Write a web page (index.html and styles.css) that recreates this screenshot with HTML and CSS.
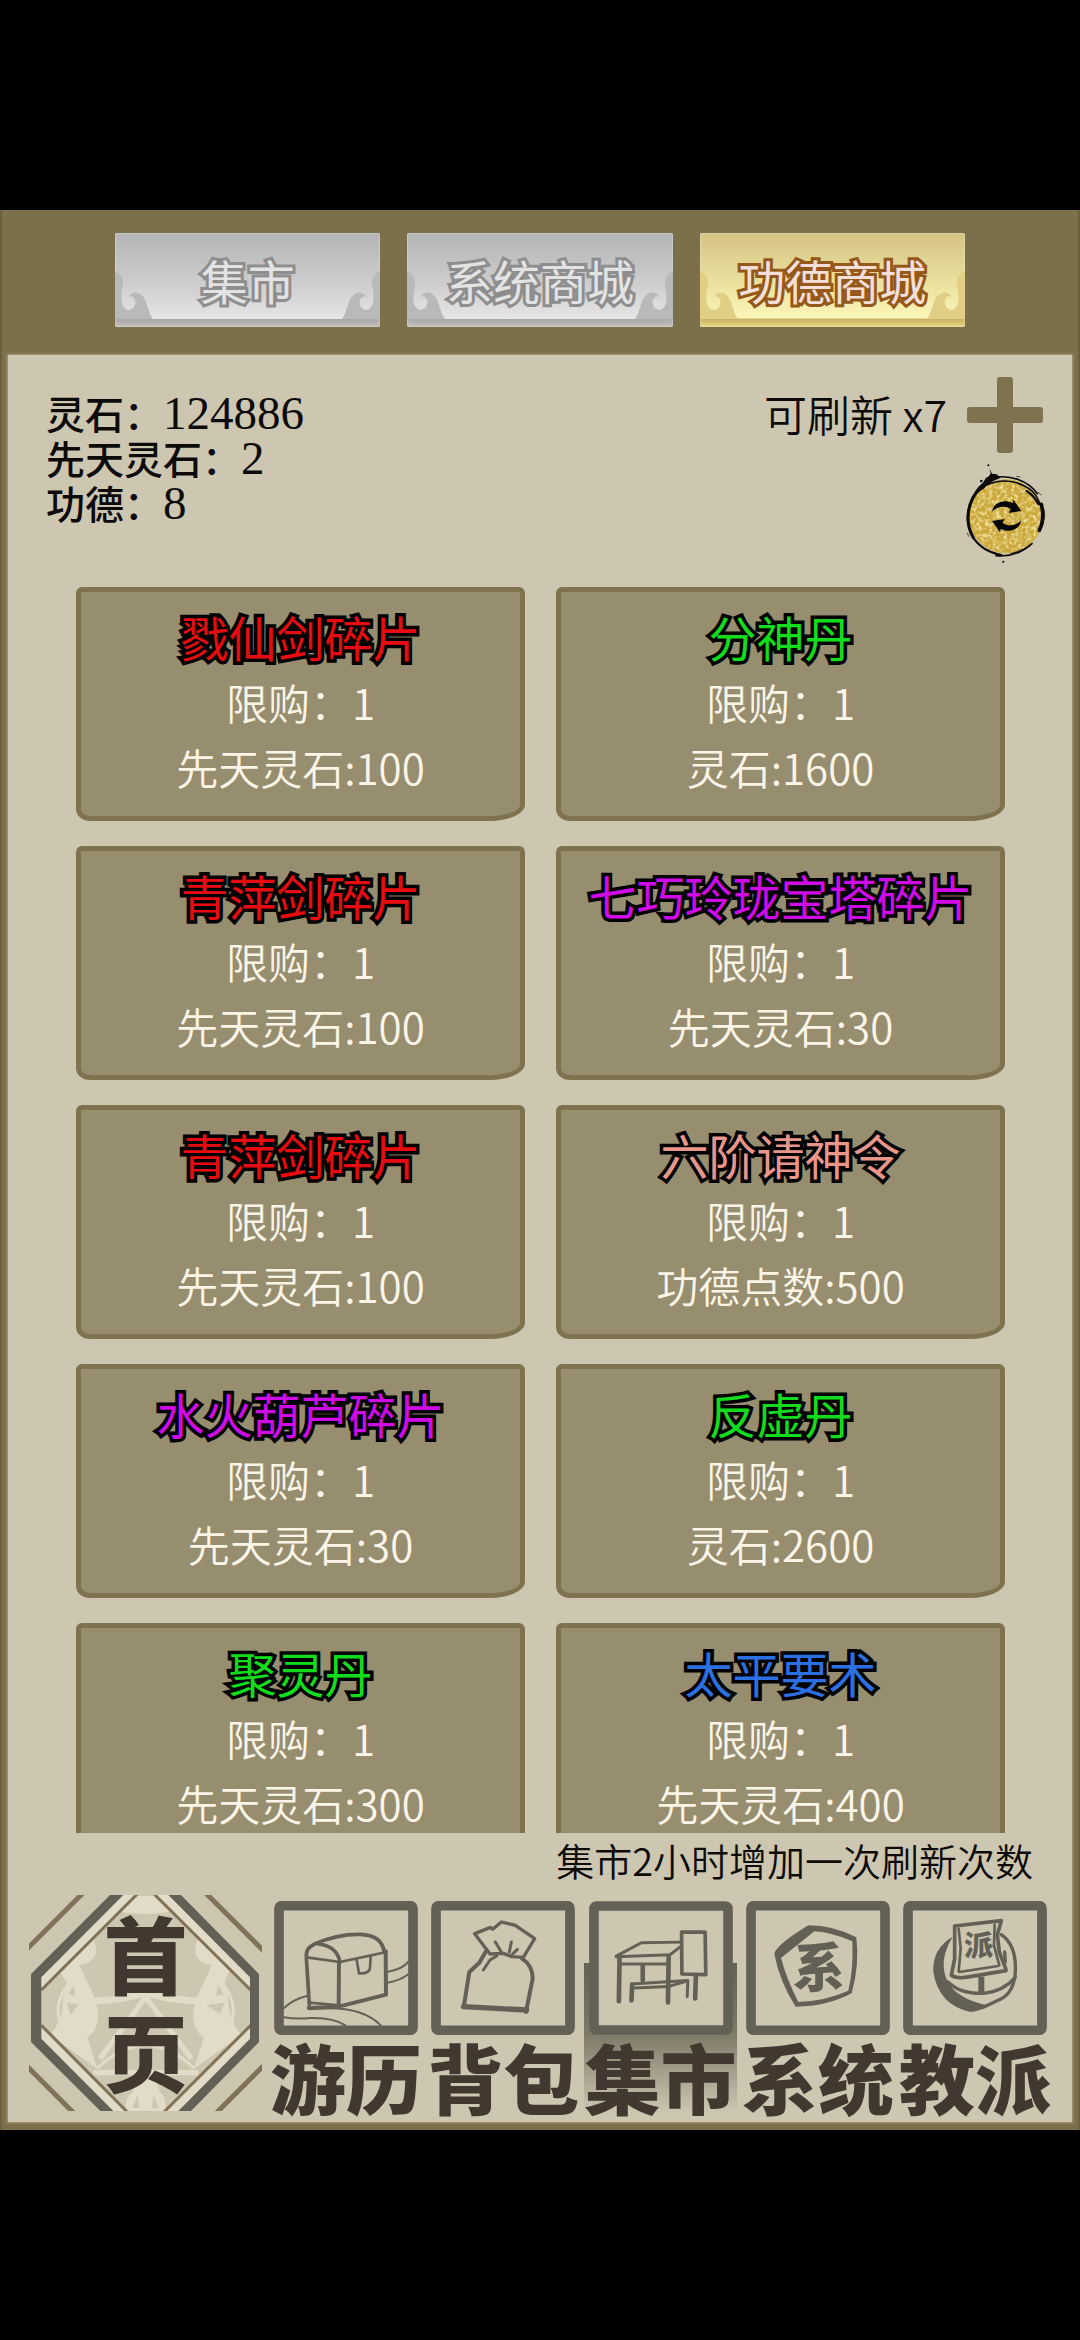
FILE: index.html
```html
<!DOCTYPE html>
<html lang="zh-CN">
<head>
  <meta charset="UTF-8">
  <title>功德商城</title>
  <meta name="viewport" content="width=device-width, initial-scale=1.0">
  <link rel="stylesheet" href="styles.css">
</head>
<body>
  <svg class="defs" aria-hidden="true">
    <defs>
      <path id="curl" d="M0 38 Q9 42 8 52 C6 60 4 74 13 77 C20 77 23 68 18 64 Q15 62 13 65 Q17 58 23 60 C33 64 31 76 38 86 H0 Z"/>
    </defs>
  </svg>

  <div class="game">
    <header class="tabs">
      <button class="tab">
        <svg class="curl" viewBox="0 0 38 94"><use href="#curl"/></svg>
        <span>集市</span>
        <svg class="curl flip" viewBox="0 0 38 94"><use href="#curl"/></svg>
      </button>
      <button class="tab">
        <svg class="curl" viewBox="0 0 38 94"><use href="#curl"/></svg>
        <span>系统商城</span>
        <svg class="curl flip" viewBox="0 0 38 94"><use href="#curl"/></svg>
      </button>
      <button class="tab active">
        <svg class="curl" viewBox="0 0 38 94"><use href="#curl"/></svg>
        <span>功德商城</span>
        <svg class="curl flip" viewBox="0 0 38 94"><use href="#curl"/></svg>
      </button>
    </header>

    <main class="panel">
      <section class="top">
        <div class="stats">
          <p>灵石：<span>124886</span></p>
          <p>先天灵石：<span>2</span></p>
          <p>功德：<span>8</span></p>
        </div>
        <div class="refresh">
          <div class="refresh-row">
            <span>可刷新 x7</span>
            <button class="icon-btn" aria-label="增加次数">
              <svg class="plus" viewBox="0 0 84 76">
                <rect x="34" y="0" width="16" height="76" rx="3"/>
                <rect x="4" y="30" width="76" height="16" rx="3"/>
              </svg>
            </button>
          </div>
          <button class="icon-btn" aria-label="刷新">
            <svg class="coin" viewBox="790 310 250 300">
              <defs>
                <filter id="grain" x="0" y="0" width="1" height="1">
                  <feTurbulence type="fractalNoise" baseFrequency="0.09" numOctaves="3" seed="4"/>
                  <feColorMatrix values="0 0 0 0 0.93  0 0 0 0 0.83  0 0 0 0 0.42  2.4 0 0 0 -1"/>
                  <feComposite in2="SourceGraphic" operator="in"/>
                </filter>
              </defs>
              <circle cx="918" cy="470" r="111" fill="#cba83c"/>
              <circle cx="918" cy="470" r="109" fill="#fff" filter="url(#grain)"/>
              <g fill="none" stroke="#0b0a08" stroke-linecap="round">
                <path d="M840 386 C800 426 794 490 820 534" stroke-width="9"/>
                <path d="M818 532 C840 566 870 580 904 586" stroke-width="6"/>
                <path d="M832 548 Q852 572 886 580" stroke-width="4"/>
                <path d="M888 588 Q950 594 996 552" stroke-width="5"/>
                <path d="M932 582 Q972 572 990 556" stroke-width="3"/>
                <path d="M880 354 C930 344 984 362 1012 402" stroke-width="5"/>
                <path d="M860 376 C910 354 960 364 996 394 Q1014 412 1020 436" stroke-width="5"/>
                <path d="M980 394 Q1004 410 1014 432" stroke-width="7"/>
                <path d="M1024 434 C1032 466 1028 492 1018 512" stroke-width="11"/>
                <path d="M1031 450 Q1035 476 1026 500" stroke-width="4"/>
                <path d="M810 430 Q796 470 806 506" stroke-width="4"/>
                <path d="M950 350 L960 352 M1014 398 L1024 406 M802 520 L806 530" stroke-width="2"/>
              </g>
              <path fill="#0b0a08" d="M812 428 Q820 392 850 368 L858 354 Q868 352 872 340 L868 326 L876 342 L890 344 L902 354 L880 364 L862 376 Q850 392 832 398 Q820 410 812 428 Z"/>
              <circle cx="865" cy="317" r="3"/><circle cx="844" cy="364" r="4"/><circle cx="910" cy="606" r="3"/>
              <path id="arrow" fill="#050505" d="M876 456 C880 430 908 416 938 430 L940 420 L964 454 L926 460 L932 448 C914 436 892 440 876 456 Z"/>
              <use href="#arrow" transform="rotate(180 920 469)"/>
            </svg>
          </button>
        </div>
      </section>

      <section class="goods" aria-label="商品">
        <button class="card"><b class="red">戮仙剑碎片</b><span>限购：1</span><span>先天灵石:100</span></button>
        <button class="card"><b class="green">分神丹</b><span>限购：1</span><span>灵石:1600</span></button>
        <button class="card"><b class="red">青萍剑碎片</b><span>限购：1</span><span>先天灵石:100</span></button>
        <button class="card"><b class="purple">七巧玲珑宝塔碎片</b><span>限购：1</span><span>先天灵石:30</span></button>
        <button class="card"><b class="red">青萍剑碎片</b><span>限购：1</span><span>先天灵石:100</span></button>
        <button class="card"><b class="salmon">六阶请神令</b><span>限购：1</span><span>功德点数:500</span></button>
        <button class="card"><b class="purple">水火葫芦碎片</b><span>限购：1</span><span>先天灵石:30</span></button>
        <button class="card"><b class="green">反虚丹</b><span>限购：1</span><span>灵石:2600</span></button>
        <button class="card"><b class="green">聚灵丹</b><span>限购：1</span><span>先天灵石:300</span></button>
        <button class="card"><b class="blue">太平要术</b><span>限购：1</span><span>先天灵石:400</span></button>
      </section>

      <p class="note">集市2小时增加一次刷新次数</p>

      <nav class="menu">
        <a class="home" href="#home">
          <svg viewBox="87 69 699 648" aria-hidden="true">
            <path fill="#e1dbc7" d="M350 69 H525 L765 305 V510 L555 717 H320 L110 510 V305 Z"/>
            <path fill="#cdc6b1" d="M410 69 H466 L750 355 V460 L495 717 H380 L124 460 V355 Z"/>
            <g fill="#e1dbc7">
              <path d="M262 162 Q292 210 288 246 Q270 280 238 278 L262 330 Q300 400 294 440 Q290 480 262 496 L292 590 L150 490 Q190 440 190 380 L200 330 L180 300 Z"/>
              <path d="M612 162 Q582 210 586 246 Q604 280 636 278 L612 330 Q574 400 580 440 Q584 480 612 496 L582 590 L724 490 Q684 440 684 380 L674 330 L690 290 Z"/>
              <path d="M330 112 Q437 140 545 112 L466 72 H410 Z"/>
              <path d="M414 600 H460 L480 660 Q502 680 496 717 H378 Q372 680 398 660 Z"/>
              <path d="M190 370 Q310 390 437 350 Q560 390 684 370 V388 Q560 412 437 372 Q310 412 190 388 Z"/>
            </g>
            <g fill="none" stroke="#e1dbc7" stroke-width="9">
              <path d="M210 330 Q150 400 190 480 M664 330 Q724 400 684 480"/>
              <path d="M437 375 L300 560 M437 375 L574 560 M280 602 H594" stroke-width="16"/>
              <path d="M290 590 Q437 450 584 590"/>
            </g>
            <g fill="#cdc6b1">
              <path d="M200 392 L236 396 L212 430 Z M674 392 L620 400 L660 426 Z M220 340 L226 372 L204 366 Z M654 340 L648 372 L670 366 Z"/>
              <path d="M412 670 L418 708 H398 Z M460 670 L478 708 H456 Z"/>
            </g>
            <g fill="none" stroke="#7f7258">
              <path stroke-width="9" d="M412 66 L124 354 M462 66 L752 354 M124 460 L382 720 M752 460 L492 720"/>
              <path stroke-width="15" d="M250 62 L80 232 M616 62 L792 238 M80 582 L222 724 M648 724 L792 580"/>
            </g>
            <path fill="#636155" d="M330 69 H370 L124 316 V500 L340 717 H301 L93 510 V306 Z M505 69 H543 L777 306 V510 L573 717 H535 L750 500 V316 Z"/>
          </svg>
          <span>首</span>
          <span>页</span>
        </a>

        <a class="item" href="#travel">
          <svg viewBox="42 61 432 402" aria-hidden="true">
            <rect class="frame" x="57" y="75" width="402" height="374" rx="8"/>
            <g stroke-width="6">
              <path d="M72 382 Q100 356 140 346 M72 410 Q110 416 150 412 Q220 410 256 434 M150 386 Q300 370 362 434 M382 274 Q430 264 446 242 M382 306 Q420 300 446 280"/>
            </g>
            <path stroke-width="11" d="M140 232 Q134 204 164 190 Q230 160 300 161 Q366 164 372 212 M176 190 Q230 196 240 244 M139 232 L148 372"/>
            <path stroke-width="8" d="M140 230 L240 244 L380 214 M290 238 L297 278 Q328 280 330 262 L332 226 M148 366 L236 374"/>
            <path stroke-width="12" d="M237 244 L236 372 M377 212 L378 342 L236 378 L146 382"/>
          </svg>
          <span>游历</span>
        </a>
        <a class="item" href="#bag">
          <svg viewBox="507 57 432 402" aria-hidden="true">
            <rect class="frame" x="522" y="71" width="402" height="374" rx="8"/>
            <path stroke-width="10" d="M638 155 L686 136 L692 142 L718 120 L760 130 L818 170 L784 226 L750 224 L724 214 L684 216 Z"/>
            <path stroke-width="12" d="M672 208 L652 242 L622 270 L605 376 M780 230 Q812 250 812 290 L792 390"/>
            <path stroke-width="16" d="M604 374 L794 384"/>
            <path stroke-width="9" d="M700 180 L718 210 M748 180 L742 210 M766 202 L752 216 M704 222 L684 234 L664 264"/>
          </svg>
          <span>背包</span>
        </a>
        <a class="item active" href="#market">
          <svg viewBox="52 57 434 402" aria-hidden="true">
            <rect class="frame" x="67" y="71" width="404" height="374" rx="8"/>
            <path stroke-width="9" d="M134 222 L210 182 L330 180 M134 224 L296 218 L330 192 M148 246 H288 M180 306 L350 296 M190 318 L290 314 L340 300 M350 296 L348 344"/>
            <path stroke-width="14" d="M144 228 L142 358 M292 222 L290 362 M182 308 L180 356 M374 284 L372 350 M214 250 V296"/>
            <path stroke-width="11" d="M331 150 H402 L404 278 L332 276 Z"/>
          </svg>
          <span>集市</span>
        </a>
        <a class="item" href="#system">
          <svg viewBox="519 57 432 402" aria-hidden="true">
            <rect class="frame" x="534" y="71" width="402" height="374" rx="8"/>
            <path fill="#636155" stroke="none" fill-rule="evenodd" d="M706 130 Q780 130 850 166 Q860 250 836 334 Q760 374 668 374 Q620 300 604 216 Q608 190 706 130 Z M724 148 L624 228 Q640 290 676 360 Q760 356 826 326 Q842 260 838 178 Q780 152 724 148 Z"/>
            <text x="738" y="316" font-size="156">系</text>
          </svg>
          <span>系统</span>
        </a>
        <a class="item" href="#sect">
          <svg viewBox="129 57 432 402" aria-hidden="true">
            <rect class="frame" x="144" y="71" width="402" height="374" rx="8"/>
            <path fill="#636155" stroke="none" d="M278 164 Q216 200 220 270 Q236 370 332 390 Q370 386 382 370 Q290 350 264 300 Q232 240 278 164 Z"/>
            <path stroke-width="10" d="M424 158 Q470 190 466 270 Q462 330 424 350 L370 376 M264 300 Q300 336 370 334 Q430 328 466 286 M434 210 L436 240"/>
            <path stroke-width="11" d="M284 132 L424 116 L412 158 L418 210 L438 262 M284 132 L284 230 L274 280 Q290 292 330 284 L438 266"/>
            <path stroke-width="8" d="M296 140 L302 200 L296 268 M404 128 L402 190 L418 250 M298 270 L414 252"/>
            <path stroke-width="18" stroke-linecap="butt" d="M364 284 V332"/>
            <text x="356" y="222" font-size="88">派</text>
          </svg>
          <span>教派</span>
        </a>
      </nav>
    </main>
  </div>
</body>
</html>
```

FILE: styles.css
```css
* { box-sizing: border-box; }
body {
  margin: 0;
  height: 100vh;
  padding: 210px 0;
  background: #000;
  color: #0c0b09;
  font-family: "Noto Sans CJK SC", sans-serif;
  font-weight: 350;
}
p { margin: 0; }
a { text-decoration: none; }
button {
  font: inherit;
  border: 0;
  padding: 0;
  background: none;
  cursor: pointer;
}
svg { display: block; }
.defs {
  position: absolute;
  width: 0;
  height: 0;
}
.game {
  display: flex;
  flex-direction: column;
  height: 100%;
  padding: 0 8px 8px;
  background: #7c704b;
  box-shadow: inset 2px 0 #6b603f, inset -2px 0 #6b603f;
}

/* tabs */
.tabs {
  display: flex;
  justify-content: center;
  gap: 27px;
  padding: 23px 107px 28px;
}
.tab {
  flex: 1;
  display: flex;
  align-items: center;
  justify-content: space-between;
  height: 94px;
  border-radius: 2px;
  background: linear-gradient(#b3b5b5, #cfcdce 55%, #e6e5e5 91%, #a9a9a9 92%, #c3c0bf);
  box-shadow: inset 0 0 2px #eee;
  color: #e3e3e3;
  font-size: 47px;
  font-weight: 400;
  line-height: 94px;
  white-space: nowrap;
}
.tab span {
  margin: 0 -20px;
  -webkit-text-stroke: 6px #8e8e8e;
  paint-order: stroke fill;
  stroke-linejoin: round;
}
.curl {
  width: 38px;
  height: 94px;
  fill: #b8b9b9;
}
.flip { transform: scaleX(-1); }
.tab.active {
  background: linear-gradient(#d5c384, #eadf9c 50%, #fbf5b8 90%, #c9b264 92%, #ecdc82);
  color: #f3dfd8;
}
.tab.active span { -webkit-text-stroke-color: #94591a; }
.tab.active .curl { fill: #e0cf85; }

/* panel */
.panel {
  flex: 1;
  display: flex;
  flex-direction: column;
  min-height: 0;
  background: #cdc6b1;
  box-shadow: 0 0 2px 1px #a69b78;
}
.top {
  display: flex;
  justify-content: space-between;
  padding: 22px 25px 24px 38px;
}
.stats {
  padding-top: 13px;
  font-size: 39px;
  font-weight: 500;
  line-height: 45px;
}
.stats p { height: 45px; }
.stats span {
  font-family: "Liberation Serif", serif;
  font-size: 47px;
  font-weight: 400;
}
.refresh {
  display: flex;
  flex-direction: column;
  align-items: flex-end;
  gap: 10px;
}
.refresh-row {
  display: flex;
  align-items: center;
  gap: 16px;
  font-size: 43px;
  line-height: 72px;
}
.refresh-row span { padding-bottom: 4px; }
.plus {
  width: 84px;
  height: 76px;
  fill: #7f734f;
}
.coin {
  width: 84px;
  height: 100px;
}

/* goods */
.goods {
  flex: 1;
  display: grid;
  grid-template-columns: 1fr 1fr;
  align-content: start;
  gap: 25px 31px;
  min-height: 0;
  padding: 0 67px 0 68px;
  overflow-y: auto;
  scrollbar-width: none;
}
.card {
  display: flex;
  flex-direction: column;
  align-items: center;
  min-height: 234px;
  padding: 12px 0 18px;
  border: 5px solid #7f734f;
  border-radius: 6px 6px 36px 14px / 6px 6px 16px 12px;
  background: #978d6f;
  color: #fbf5e8;
  font-size: 42px;
  line-height: 65px;
  white-space: nowrap;
}
.card b {
  font-size: 48px;
  font-weight: 400;
  -webkit-text-stroke: 7px #000;
  paint-order: stroke fill;
  stroke-linejoin: round;
}
.card .red { color: #e60c10; }
.card .green { color: #12dc1c; }
.card .purple { color: #cf0be6; }
.card .salmon { color: #e8968a; }
.card .blue { color: #2b6fe0; }
.note {
  padding: 0 39px 8px;
  font-size: 38px;
  line-height: 54px;
  text-align: right;
}

/* bottom menu */
.menu {
  display: flex;
  gap: 5px;
  padding: 0 21px 5px;
  color: #423830;
  font-weight: 900;
}
.menu a { color: inherit; }
.home {
  position: relative;
  flex: none;
  width: 233px;
  height: 216px;
  margin-right: 3px;
  padding-top: 8px;
  font-size: 84px;
  line-height: 98px;
  text-align: center;
}
.home svg {
  position: absolute;
  inset: 0;
  width: 100%;
  height: 100%;
}
.home span {
  position: relative;
  display: block;
}
.item {
  flex: 1;
  display: flex;
  flex-direction: column;
  align-items: center;
  padding-top: 6px;
  font-size: 76px;
  line-height: 82px;
  white-space: nowrap;
}
.item svg {
  width: 144px;
  height: 134px;
  fill: none;
  stroke: #636155;
  stroke-linecap: round;
  stroke-linejoin: round;
}
.item .frame {
  fill: #cdc6b1;
  stroke-width: 29px;
}
.item text {
  fill: #636155;
  stroke: none;
  font-weight: 900;
  text-anchor: middle;
}
.item.active { background: linear-gradient(transparent 68px, #636155 68px, #7d7967 62%, #cdc6b1 98%); }
```
